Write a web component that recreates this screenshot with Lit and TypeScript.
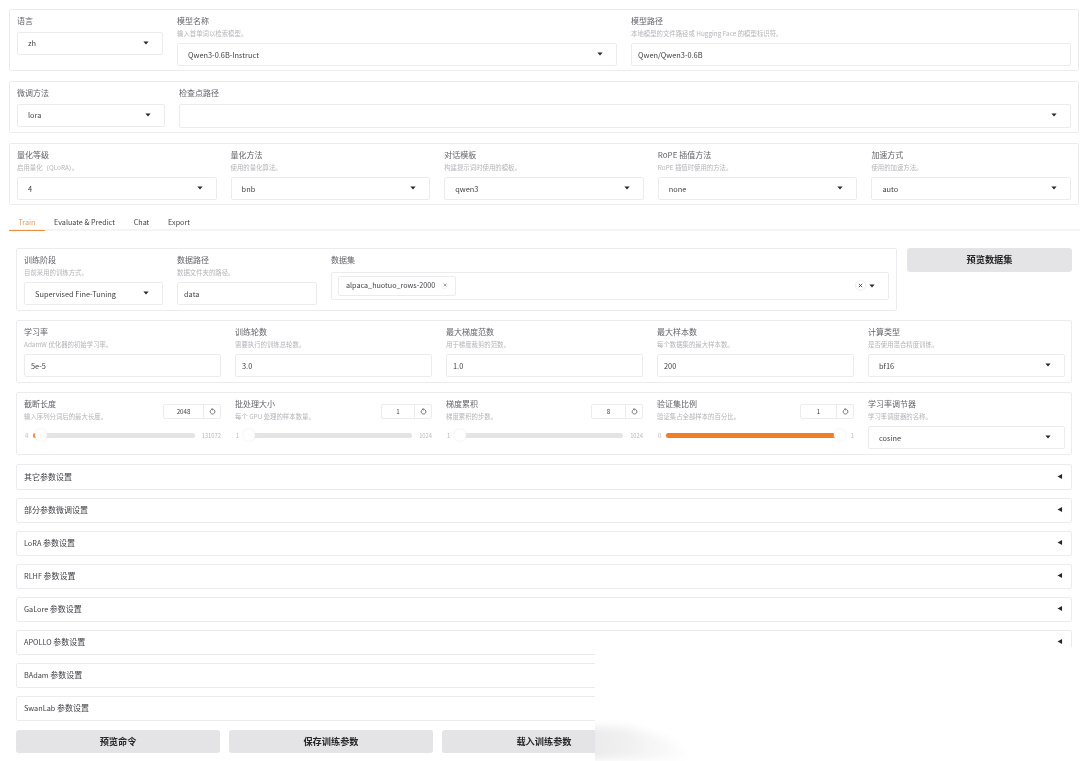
import { LitElement, html, css } from "lit";
import { customElement } from "lit/decorators.js";

const caret = html`<svg class="caret" viewBox="0 0 8 5" width="6" height="4"><path d="M0.5 0.5H7.5L4 4.5Z" fill="#27272a"/></svg>`;

@customElement("app-root")
export class AppRoot extends LitElement {
  static styles = css`
    :host { display: block; width: 1080px; height: 761px; overflow: hidden; background: #fff; position: relative;
      font-family: "Noto Sans CJK SC", "Noto Sans", sans-serif; color: #27272a; }
    * { box-sizing: border-box; }
    .page { padding: 9px 1px 0 9px; display: flex; flex-direction: column; filter: blur(0.4px); }
    .panel { border: 1px solid #ececee; border-radius: 2px; padding: 6px 7px; display: flex; gap: 14px; }
    .p1 { height: 62px; }
    .p2 { height: 52px; margin-top: 10px; }
    .p3 { height: 62px; margin-top: 10px; }
    .f { display: flex; flex-direction: column; min-width: 0; }
    .l { font-size: 8px; line-height: 10px; color: #62626b; height: 11px; white-space: nowrap; flex: none; }
    .i { font-size: 6.4px; line-height: 8px; height: 9px; margin-top: 2.5px; color: #b4b4ba; white-space: nowrap; flex: none; }
    .b { height: 23px; border: 1px solid #ececee; border-radius: 2px; display: flex; align-items: center; justify-content: space-between;
      padding: 0 13px 1px 10px; font-size: 7.4px; color: #3f3f46; white-space: nowrap; margin-top: 4.5px; flex: none; }
    .i + .b { margin-top: 4.5px; }
    .b.in { padding-left: 6px; }
    .b.tall { height: 24.5px; }
    .caret { flex: none; }
    .tabs { display: flex; height: 18px; margin: 8px -1px 0 0; border-bottom: 2px solid #f4f4f5; font-size: 7.2px; color: #3f3f46; }
    .tab { padding: 0 9.4px; line-height: 18px; white-space: nowrap; height: 18px; }
    .tab.on { color: #ea9a5a; border-bottom: 1px solid #ed8d43; }
    .train { padding: 17px 0 0 7px; display: flex; flex-direction: column; }
    .top { display: flex; gap: 10px; align-items: flex-start; }
    .g { width: 881px; height: 63px; border: 1px solid #ececee; border-radius: 2px; padding: 6px 7px; display: flex; gap: 14px; }
    .cta { flex: 0 0 165px; height: 24px; background: #e4e4e7; border-radius: 3px; font-size: 9.2px; font-weight: 700; color: #27272a;
      display: flex; align-items: center; justify-content: center; padding-bottom: 2px; }
    .ds { height: 28px; padding: 0 13px 0 6px; margin-top: 5.5px; }
    .chip { display: flex; align-items: center; gap: 6px; height: 20px; border: 1px solid #ececee; border-radius: 2px; padding: 0 7px 1px 7px; font-size: 7.2px; color: #3f3f46; }
    .x { width: 7px; height: 7px; border: 1px solid #f0f0f2; border-radius: 50%; display: flex; align-items: center; justify-content: center; }
    .ends { display: flex; align-items: center; gap: 3px; }
    .bigx { width: 11px; height: 11px; border: 1px solid #ececee; border-radius: 50%; display: flex; align-items: center; justify-content: center; }
    .row { width: 1056px; margin-top: 9px; border: 1px solid #ececee; border-radius: 2px; height: 63px; padding: 6px 6px 6px 7px; display: flex; gap: 14px; }
    .row .f { flex: 0 0 197px; }
    .sl-top { display: flex; justify-content: space-between; height: 27px; flex: none; }
    .num { height: 15px; margin-top: 5px; border: 1px solid #ececee; border-radius: 2px; display: flex; font-size: 6.2px; color: #3f3f46; flex: none; }
    .num span { flex: 1; text-align: center; line-height: 13px; }
    .num em { flex: 0 0 17px; border-left: 1px solid #ececee; display: flex; align-items: center; justify-content: center; }
    .track-row { display: flex; align-items: center; gap: 5px; font-size: 5.8px; color: #b8b8be; margin-top: 3px; height: 12px; white-space: nowrap; padding-left: 1px; flex: none; }
    .track { flex: 1; height: 5px; background: #e4e4e7; border-radius: 3px; position: relative; margin-right: 2px; }
    .fill { position: absolute; left: 0; top: 0; bottom: 0; background: #f17d24; border-radius: 3px; }
    .thumb { position: absolute; top: -3.5px; width: 12px; height: 12px; background: #fff; border-radius: 50%; box-shadow: 0 0 2px #e2e2e6; }
    .acc { width: 1056px; height: 26px; margin-top: 7px; border: 1px solid #ececee; border-radius: 2px; display: flex; align-items: center; justify-content: space-between;
      padding: 0 8px 2px 7px; font-size: 8px; color: #3f3f46; }
    .acc svg { flex: none; }
    .lat { font-size: 7.3px; }
    .acc.first { margin-top: 9px; }
    .acc.s { height: 25px; margin-top: 8px; }
    .acts { display: flex; gap: 9px; margin-top: 9px; }
    .act { width: 204px; height: 23px; background: #e4e4e7; border-radius: 3px; font-size: 9.2px; font-weight: 700; display: flex; align-items: center; justify-content: center; color: #27272a; padding-bottom: 1px; }
    .cover { position: absolute; left: 595px; right: 0; top: 647px; bottom: 0; background: #fff; }
    .cover svg { position: absolute; left: 0; top: 0; display: block; }
  `;

  private sel(v: string) { return html`<div class="b"><span>${v}</span>${caret}</div>`; }
  private inp(v: string) { return html`<div class="b in"><span>${v}</span></div>`; }
  private reset() {
    return html`<svg viewBox="0 0 10 10" width="7" height="7" fill="none" stroke="#3f3f46" stroke-width="1"><path d="M2.3 3.2A3.4 3.4 0 1 0 5 1.8H3.6"/><path d="M5 .4 3.4 1.8 5 3.2"/></svg>`;
  }
  private slider(label: string, info: string, value: string, min: string, max: string, fill: string, thumb: number, numW: number) {
    return html`<div class="f">
      <div class="sl-top">
        <div><div class="l">${label}</div><div class="i">${info}</div></div>
        <div class="num" style="width:${numW}px"><span>${value}</span><em>${this.reset()}</em></div>
      </div>
      <div class="track-row"><span>${min}</span>
        <div class="track"><div class="fill" style="width:${fill}"></div><div class="thumb" style="left:${thumb}px"></div></div>
        <span>${max}</span></div>
    </div>`;
  }
  private acc(t: string, cls: string, arrow = true) {
    const m = t.match(/^([A-Za-z]+ )?(.*)$/)!;
    return html`<div class="acc ${cls}"><span><span class="lat">${m[1] ?? ""}</span>${m[2]}</span>${arrow
      ? html`<svg viewBox="0 0 6 6" width="6" height="5"><path d="M0 3 5.5 0V6Z" fill="#27272a"/></svg>` : ""}</div>`;
  }

  render() {
    return html`
      <div class="page">
        <div class="panel p1">
          <div class="f" style="flex:0 0 146px"><div class="l">语言</div>${this.sel("zh")}</div>
          <div class="f" style="flex:0 0 440px"><div class="l">模型名称</div><div class="i">输入首单词以检索模型。</div>${this.sel("Qwen3-0.6B-Instruct")}</div>
          <div class="f" style="flex:1"><div class="l">模型路径</div><div class="i">本地模型的文件路径或 Hugging Face 的模型标识符。</div>${this.inp("Qwen/Qwen3-0.6B")}</div>
        </div>
        <div class="panel p2">
          <div class="f" style="flex:0 0 148px"><div class="l">微调方法</div>${this.sel("lora")}</div>
          <div class="f" style="flex:1"><div class="l">检查点路径</div><div class="b tall"><span></span>${caret}</div></div>
        </div>
        <div class="panel p3">
          ${[["量化等级","启用量化（QLoRA）。","4"],["量化方法","使用的量化算法。","bnb"],["对话模板","构建提示词时使用的模板。","qwen3"],["RoPE 插值方法","RoPE 插值时使用的方法。","none"],["加速方式","使用的加速方法。","auto"]].map(
            ([l,i,v]) => html`<div class="f" style="flex:1 1 0"><div class="l">${l}</div><div class="i">${i}</div>${this.sel(v)}</div>`)}
        </div>
        <div class="tabs">
          <div class="tab on">Train</div><div class="tab">Evaluate &amp; Predict</div><div class="tab">Chat</div><div class="tab">Export</div>
        </div>
        <div class="train">
          <div class="top">
            <div class="g">
              <div class="f" style="flex:0 0 139px"><div class="l">训练阶段</div><div class="i">目前采用的训练方式。</div>${this.sel("Supervised Fine-Tuning")}</div>
              <div class="f" style="flex:0 0 140px"><div class="l">数据路径</div><div class="i">数据文件夹的路径。</div>${this.inp("data")}</div>
              <div class="f" style="flex:1"><div class="l">数据集</div>
                <div class="b ds"><div class="chip"><span>alpaca_huotuo_rows-2000</span><span class="x"><svg viewBox="0 0 6 6" width="4" height="4" stroke="#71717a"><path d="M1 1 5 5M5 1 1 5"/></svg></span></div>
                  <div class="ends"><span class="bigx"><svg viewBox="0 0 6 6" width="5" height="5" stroke="#3f3f46"><path d="M1 1 5 5M5 1 1 5"/></svg></span>${caret}</div></div></div>
            </div>
            <div class="cta">预览数据集</div>
          </div>
          <div class="row">
            ${[["学习率","AdamW 优化器的初始学习率。","5e-5"],["训练轮数","需要执行的训练总轮数。","3.0"],["最大梯度范数","用于梯度裁剪的范数。","1.0"],["最大样本数","每个数据集的最大样本数。","200"]].map(
              ([l,i,v]) => html`<div class="f"><div class="l">${l}</div><div class="i">${i}</div>${this.inp(v)}</div>`)}
            <div class="f"><div class="l">计算类型</div><div class="i">是否使用混合精度训练。</div>${this.sel("bf16")}</div>
          </div>
          <div class="row">
            ${this.slider("截断长度","输入序列分词后的最大长度。","2048","4","131072","7px",2,58)}
            ${this.slider("批处理大小","每个 GPU 处理的样本数量。","1","1","1024","0",-1,51)}
            ${this.slider("梯度累积","梯度累积的步数。","8","1","1024","5px",-1,52)}
            ${this.slider("验证集比例","验证集占全部样本的百分比。","1","0","1","100%",168,54)}
            <div class="f"><div class="l">学习率调节器</div><div class="i">学习率调度器的名称。</div>${this.sel("cosine")}</div>
          </div>
          ${this.acc("其它参数设置","first")}
          ${this.acc("部分参数微调设置","s")}
          ${this.acc("LoRA 参数设置","s")}
          ${this.acc("RLHF 参数设置","s")}
          ${this.acc("GaLore 参数设置","s")}
          ${this.acc("APOLLO 参数设置","s")}
          ${this.acc("BAdam 参数设置","s",false)}
          ${this.acc("SwanLab 参数设置","s",false)}
          <div class="acts"><div class="act">预览命令</div><div class="act">保存训练参数</div><div class="act">载入训练参数</div></div>
        </div>
      </div>
      <div class="cover">
        <svg width="485" height="114" viewBox="0 0 485 114">
          <defs>
            <linearGradient id="sm" x1="0" x2="1" y1="0" y2="0"><stop offset="0" stop-color="#e9e9eb"/><stop offset="0.45" stop-color="#f2f2f3"/><stop offset="1" stop-color="#ffffff"/></linearGradient>
            <filter id="bl" x="-20%" y="-40%" width="140%" height="180%"><feGaussianBlur stdDeviation="4"/></filter>
            <clipPath id="cp"><rect x="0" y="0" width="485" height="114"/></clipPath>
          </defs>
          <g clip-path="url(#cp)"><path d="M-10 80 L30 80 L75 92 L100 112 L-10 112Z" fill="url(#sm)" filter="url(#bl)"/></g>
        </svg>
      </div>
    `;
  }
}
